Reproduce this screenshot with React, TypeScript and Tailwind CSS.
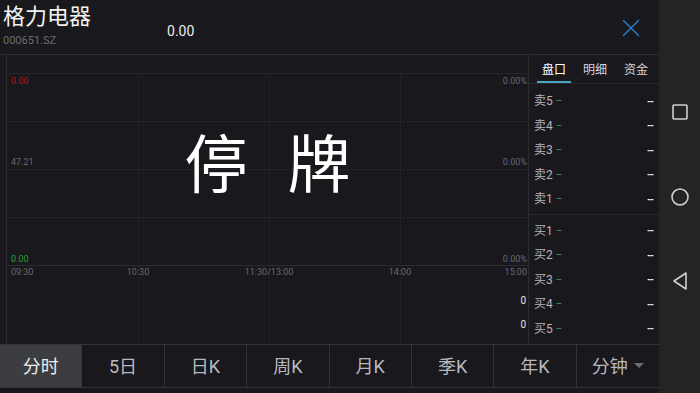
import { X } from 'lucide-react'

const sells = ['卖5', '卖4', '卖3', '卖2', '卖1']
const buys = ['买1', '买2', '买3', '买4', '买5']
const periods = ['分时', '5日', '日K', '周K', '月K', '季K', '年K']

function QuoteRow({ label }: { label: string }) {
  return (
    <div className="flex h-[24.5px] items-center pl-[5px] pr-[6px]">
      <span className="text-[12px] text-[#b4b4b8]">{label}</span>
      <span className="ml-[3px] text-[10px] leading-none text-[#2f9460]">–</span>
      <span className="ml-auto text-[10px] font-bold tracking-[-1px] text-[#e8e8e8]">--</span>
    </div>
  )
}

function TimeChart() {
  const rows = [66, 114, 162]
  const cols = [131, 262, 393]
  return (
    <div className="relative h-full w-[522px] border-l border-[#2c2c31]">
      {/* grid */}
      <svg className="absolute inset-0" width="522" height="289">
        <line x1="0" y1="18.5" x2="522" y2="18.5" stroke="#26262b" />
        {rows.map((y) => (
          <line key={y} x1="0" y1={y + 0.5} x2="522" y2={y + 0.5} stroke="#2b2b31" strokeDasharray="2 2" />
        ))}
        <line x1="0" y1="210.5" x2="522" y2="210.5" stroke="#2c2c31" />
        {cols.map((x) => (
          <line key={x} x1={x + 0.5} y1="18" x2={x + 0.5} y2="289" stroke="#27272d" strokeDasharray="2 2" />
        ))}
      </svg>

      {/* price axis */}
      <span className="absolute left-[4px] top-[20px] text-[9px] text-[#b3161c]">0.00</span>
      <span className="absolute left-[4px] top-[101px] text-[9px] text-[#6a6a70]">47.21</span>
      <span className="absolute left-[4px] top-[198px] text-[9px] text-[#25a03a]">0.00</span>
      <span className="absolute right-[1px] top-[20px] text-[9px] text-[#6a6a70]">0.00%</span>
      <span className="absolute right-[1px] top-[101px] text-[9px] text-[#6a6a70]">0.00%</span>
      <span className="absolute right-[1px] top-[198px] text-[9px] text-[#6a6a70]">0.00%</span>

      {/* time axis */}
      <span className="absolute left-[4px] top-[211px] text-[9px] text-[#6a6a70]">09:30</span>
      <span className="absolute left-[131px] top-[211px] -translate-x-1/2 text-[9px] text-[#6a6a70]">10:30</span>
      <span className="absolute left-[262px] top-[211px] -translate-x-1/2 text-[9px] text-[#6a6a70]">11:30/13:00</span>
      <span className="absolute left-[393px] top-[211px] -translate-x-1/2 text-[9px] text-[#6a6a70]">14:00</span>
      <span className="absolute right-[1px] top-[211px] text-[9px] text-[#6a6a70]">15:00</span>

      {/* volume axis */}
      <span className="absolute right-[2px] top-[238px] text-[10px] text-[#e6e6e6]">0</span>
      <span className="absolute right-[2px] top-[262px] text-[10px] text-[#e6e6e6]">0</span>

      {/* suspended */}
      <div className="absolute inset-x-0 top-[79px] flex justify-center gap-[40px] text-[63px] leading-none text-white">
        <span>停</span>
        <span>牌</span>
      </div>
    </div>
  )
}

function NavBar() {
  return (
    <div className="flex w-[41px] flex-col items-center bg-[#242424] pt-[103px]">
      <svg width="18" height="18" viewBox="0 0 18 18" fill="none" stroke="#cfcfcf" strokeWidth="1.6">
        <rect x="2" y="2" width="14" height="14" rx="1" />
      </svg>
      <svg className="mt-[66px]" width="20" height="20" viewBox="0 0 20 20" fill="none" stroke="#cfcfcf" strokeWidth="1.6">
        <circle cx="10" cy="10" r="8" />
      </svg>
      <svg className="mt-[64px]" width="18" height="20" viewBox="0 0 18 20" fill="none" stroke="#cfcfcf" strokeWidth="1.6" strokeLinejoin="round">
        <path d="M15 2 L3 10 L15 18 Z" />
      </svg>
    </div>
  )
}

export default function App() {
  return (
    <div className="flex h-[393px] w-[700px] overflow-hidden bg-[#19181d] font-['Roboto','Noto_Sans_CJK_SC',sans-serif]">
      <div className="flex w-[659px] flex-col">
        {/* header */}
        <div className="flex h-[55px] items-start border-b border-[#2c2c31]">
          <div className="pl-[3px] pt-[3px]">
            <div className="text-[22px] leading-[28px] text-[#f2f2f2]">格力电器</div>
            <div className="mt-[3px] text-[11px] leading-[14px] text-[#6c6c72]">000651.SZ</div>
          </div>
          <div className="ml-[76px] pt-[21px] text-[14px] text-[#ececec]">0.00</div>
          <X className="ml-auto mr-[13px] mt-[13px] text-[#2b7fd6]" size={30} strokeWidth={1.1} />
        </div>

        {/* chart + order book */}
        <div className="flex h-[289px]">
          <div className="pl-[6px]">
            <TimeChart />
          </div>
          <div className="flex w-[131px] flex-col border-l border-[#2c2c31]">
            <div className="flex h-[29px] items-end border-b border-[#28282d] px-[8px] text-[12px]">
              <div className="flex w-[34px] flex-col items-center">
                <span className="text-white">盘口</span>
                <span className="mt-[2px] h-[2px] w-full bg-[#4ba6c6]" />
              </div>
              <span className="mb-[4px] ml-[12px] text-[#d6d6d6]">明细</span>
              <span className="mb-[4px] ml-[17px] text-[#d6d6d6]">资金</span>
            </div>
            <div className="border-b border-[#28282d] pb-[2px] pt-[5px]">
              {sells.map((s) => (
                <QuoteRow key={s} label={s} />
              ))}
            </div>
            <div className="pt-[4px]">
              {buys.map((b) => (
                <QuoteRow key={b} label={b} />
              ))}
            </div>
          </div>
        </div>

        {/* period tabs */}
        <div className="grid h-[44px] grid-cols-8 border-y border-[#33333a] text-[18px]">
          {periods.map((p, i) => (
            <div
              key={p}
              className={`flex items-center justify-center border-r border-[#33333a] ${
                i === 0 ? 'bg-[#3b3d40] text-[#ededed]' : 'text-[#b9b9bd]'
              }`}
            >
              {p}
            </div>
          ))}
          <div className="flex items-center justify-center gap-[6px] text-[#b9b9bd]">
            分钟
            <svg width="10" height="6" viewBox="0 0 10 6">
              <path d="M0 0 H10 L5 5 Z" fill="#6c6c72" />
            </svg>
          </div>
        </div>
      </div>
      <NavBar />
    </div>
  )
}
